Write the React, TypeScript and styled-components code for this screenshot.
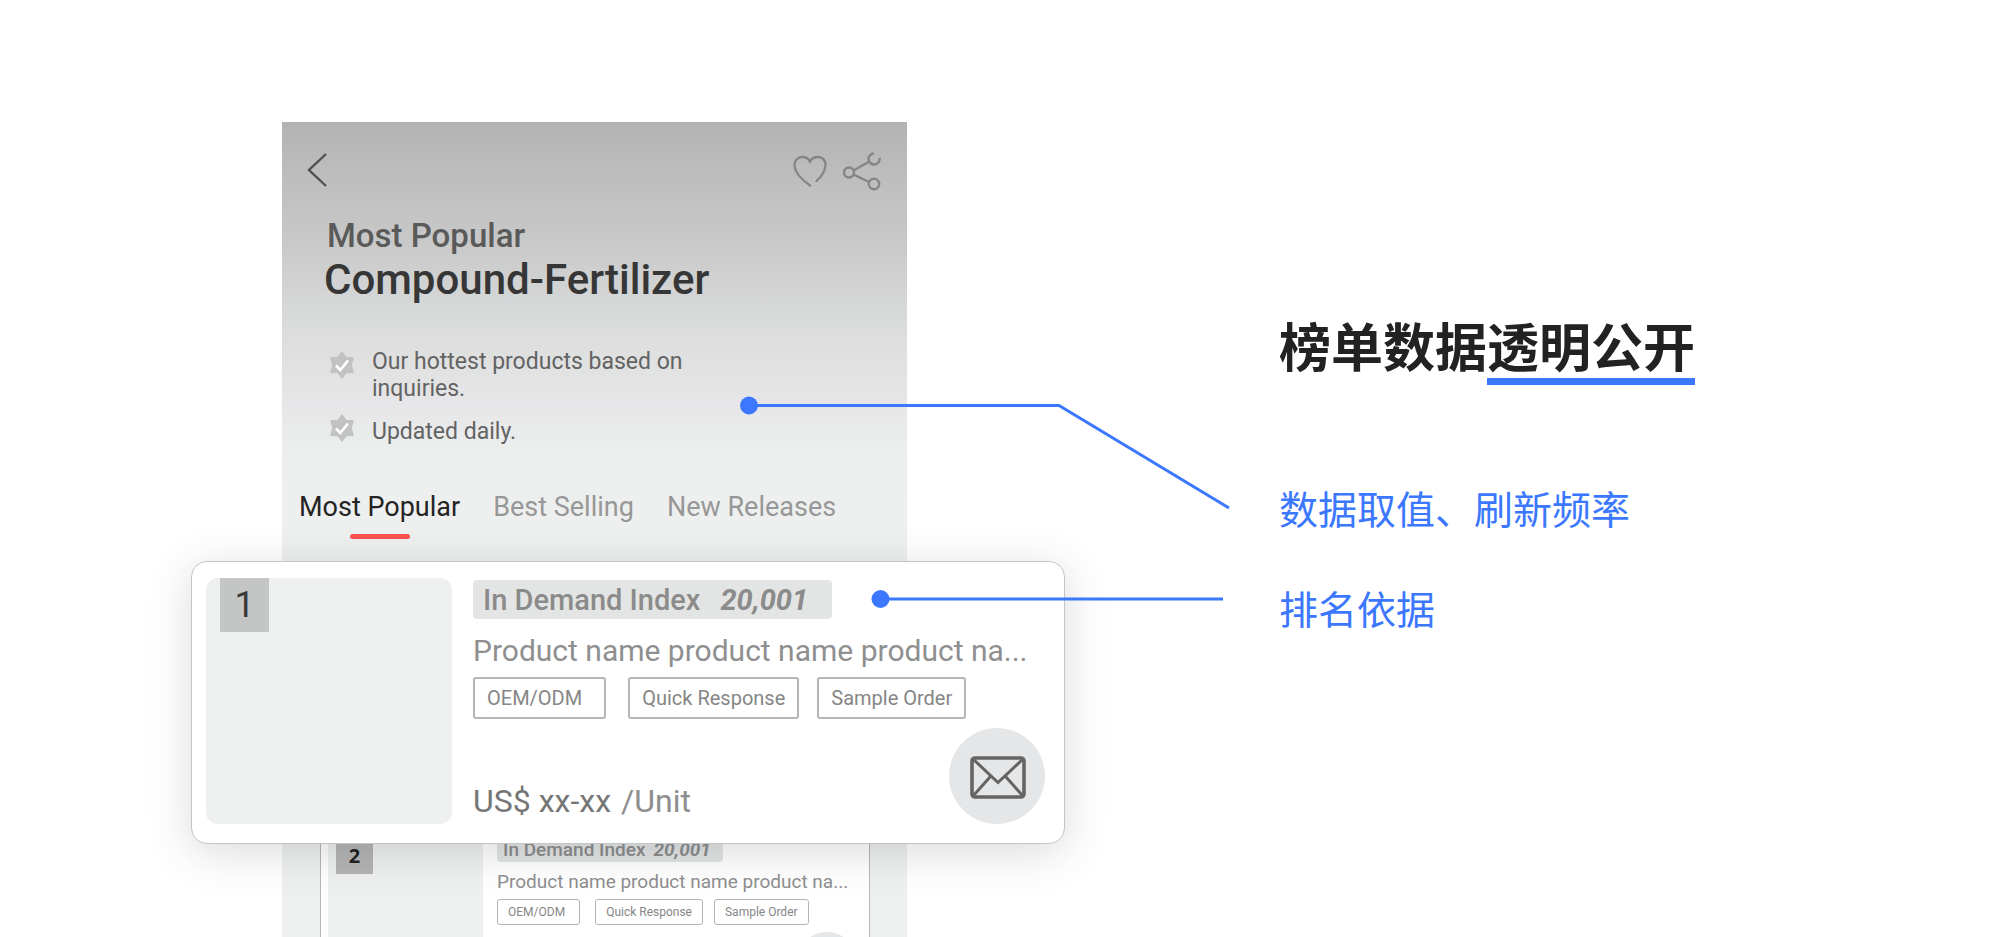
import React from "react";
import styled, { createGlobalStyle, css } from "styled-components";

const GlobalStyle = createGlobalStyle`
  * { box-sizing: border-box; }
  body {
    margin: 0;
    background: #fff;
    font-family: Roboto, "Noto Sans CJK SC", sans-serif;
  }
  h1, h2, p, ul { margin: 0; padding: 0; font-weight: 400; }
  ul { list-style: none; }
  button {
    border: 0;
    padding: 0;
    background: none;
    font: inherit;
    color: inherit;
    cursor: pointer;
  }
  svg { display: block; }
`;

const blue = "#3b78ff";

const Page = styled.main`
  display: grid;
  grid-template-columns: minmax(0, 191fr) auto minmax(0, 301fr);
  height: 100vh;
  padding-top: 122px;
  overflow: hidden;
`;

const Composition = styled.div`
  grid-column: 2;
  position: relative;
  display: flex;
  gap: 372px;
  padding-left: 91px;
`;

const Phone = styled.section`
  flex: none;
  width: 625px;
  background: linear-gradient(
    #b3b3b3 0,
    #bebfbe 64px,
    #c8c8c8 118px,
    #d5d6d7 180px,
    #dedfde 225px,
    #e6e6e8 280px,
    #edefee 335px,
    #eef0ef 400px
  );
`;

const TopBar = styled.header`
  display: flex;
  align-items: center;
  padding: 28px 26px 0 24px;
  height: 70px;
  color: #858585;
`;

const BackButton = styled.button`
  margin-right: auto;
  margin-bottom: 2px;
  color: #505050;
`;

const IconButton = styled.button`
  margin-left: 14px;
`;

const Heading = styled.div`
  padding: 23px 42px 0;
`;

const Eyebrow = styled.p`
  padding-left: 3px;
  font-size: 33px;
  line-height: 42px;
  font-weight: 500;
  color: #5a5a5a;
`;

const Category = styled.h1`
  font-size: 42px;
  line-height: 46px;
  font-weight: 500;
  color: #363636;
`;

const Facts = styled.ul`
  display: flex;
  flex-direction: column;
  gap: 16px;
  width: 430px;
  padding: 45px 0 0 46px;
`;

const Fact = styled.li`
  display: flex;
  gap: 16px;
  font-size: 23px;
  line-height: 27px;
  color: #636363;
  svg { flex: none; margin-top: 3px; }
  &:last-child svg { margin-top: -4px; }
`;

const Tabs = styled.nav`
  display: flex;
  align-items: flex-start;
  gap: 33px;
  padding: 46px 17px 0;
`;

const Tab = styled.button<{ $active?: boolean }>`
  display: flex;
  flex-direction: column;
  align-items: center;
  font-size: 27px;
  line-height: 32px;
  color: ${(p) => (p.$active ? "#242424" : "#979797")};
  ${(p) =>
    p.$active &&
    css`
      &::after {
        content: "";
        width: 60px;
        height: 5px;
        margin-top: 11px;
        border-radius: 3px;
        background: #ff5151;
      }
    `}
`;

const Products = styled.div`
  padding-top: 22px;
`;

interface Size {
  $small?: boolean;
}

const Card = styled.article<Size>`
  position: relative;
  display: flex;
  background: #fff;
  border: 1px solid #c4c6c5;
  ${(p) =>
    p.$small
      ? css`
          gap: 14px;
          height: 178px;
          margin: -19px 37px 0 38px;
          padding: 10px 12px 10px 7px;
          border-color: #b5b6b6;
        `
      : css`
          z-index: 1;
          gap: 21px;
          height: 283px;
          margin: 0 -158px 0 -91px;
          padding: 16px 19px 19px 14px;
          border-radius: 16px;
          box-shadow: 0 8px 44px rgba(50, 56, 66, 0.18);
        `}
`;

const Thumb = styled.div<Size>`
  flex: none;
  align-self: flex-start;
  width: ${(p) => (p.$small ? 155 : 246)}px;
  height: ${(p) => (p.$small ? 155 : 246)}px;
  padding-left: ${(p) => (p.$small ? 8 : 14)}px;
  border-radius: ${(p) => (p.$small ? 0 : 12)}px;
  background: #eef0ef;
`;

const Rank = styled.div<Size>`
  display: flex;
  align-items: center;
  justify-content: center;
  width: ${(p) => (p.$small ? 37 : 49)}px;
  height: ${(p) => (p.$small ? 38 : 54)}px;
  background: ${(p) => (p.$small ? "#b4b4b4" : "#c4c5c5")};
  color: ${(p) => (p.$small ? "#1e1e1e" : "#383838")};
  font: ${(p) => (p.$small ? '700 20px "Noto Sans", sans-serif' : "400 36px Roboto, sans-serif")};
`;

const Details = styled.div<Size>`
  flex: 1;
  min-width: 0;
  display: flex;
  flex-direction: column;
  align-items: flex-start;
  padding-top: ${(p) => (p.$small ? 0 : 2)}px;
`;

const DemandIndex = styled.p<Size>`
  display: flex;
  align-items: center;
  border-radius: 4px;
  background: #e3e5e4;
  color: #8b8b8b;
  font-weight: 500;
  ${(p) =>
    p.$small
      ? css`
          gap: 8px;
          height: 26px;
          padding: 0 12px 0 6px;
          font-size: 19px;
        `
      : css`
          gap: 20px;
          height: 39px;
          padding: 0 24px 0 10px;
          font-size: 29px;
        `}
  em { font-weight: 700; }
`;

const ProductName = styled.h2<Size>`
  max-width: 100%;
  white-space: nowrap;
  color: #8f8f8f;
  ${(p) =>
    p.$small
      ? css`
          margin: 8px 0 6px;
          font-size: 19px;
          line-height: 23px;
        `
      : css`
          margin: 14px 0 8px;
          font-size: 30px;
          line-height: 36px;
        `}
`;

const Tags = styled.ul<Size>`
  display: flex;
  gap: ${(p) => (p.$small ? 11 : 18)}px;
`;

const Tag = styled.li<Size>`
  display: flex;
  align-items: center;
  border: ${(p) => (p.$small ? 1 : 2)}px solid #b4b6b5;
  border-radius: 3px;
  color: #868686;
  height: ${(p) => (p.$small ? 26 : 42)}px;
  padding: 0 ${(p) => (p.$small ? 10 : 12)}px;
  font-size: ${(p) => (p.$small ? 12 : 20)}px;
  &:first-child {
    margin-right: 4px;
    padding-right: ${(p) => (p.$small ? 14 : 22)}px;
  }
`;

const Footer = styled.div`
  display: flex;
  align-items: flex-end;
  align-self: stretch;
  margin-top: auto;
`;

const Price = styled.p`
  display: flex;
  gap: 10px;
  padding-bottom: 4px;
  font-size: 32px;
  line-height: 38px;
  color: #767676;
  span { color: #8e8e8e; }
`;

const MailButton = styled.button<Size>`
  display: flex;
  align-items: center;
  justify-content: center;
  margin-left: auto;
  padding: 3px 0 0 2px;
  width: ${(p) => (p.$small ? 60 : 96)}px;
  height: ${(p) => (p.$small ? 60 : 96)}px;
  border-radius: 50%;
  background: #e5e6e7;
  color: #646464;
`;

const Copy = styled.section`
  flex: none;
  width: 420px;
  padding-top: 190px;
`;

const Title = styled.h1`
  margin-bottom: 92px;
  white-space: nowrap;
  font: 700 52px/66px "Noto Sans CJK SC", sans-serif;
  color: #222;
`;

const Underlined = styled.span`
  display: inline-block;
  border-bottom: 7px solid ${blue};
`;

const Point = styled.p`
  margin-bottom: 40px;
  white-space: nowrap;
  font: 400 39px/60px "Noto Sans CJK SC", sans-serif;
  color: ${blue};
`;

const Connectors = styled.svg`
  position: absolute;
  z-index: 2;
  left: 0;
  top: 0;
  pointer-events: none;
`;

const StarCheck = () => (
  <svg width="28" height="28" viewBox="0 0 28 28" aria-hidden="true">
    <path
      d="M14 1.200 18 6.600 25 6.800 23 14 25 21.200 18 21.400 14 26.800 10 21.400 3 21.200 5 14 3 6.800 10 6.600Z"
      fill="#c1c3c2"
      stroke="#c1c3c2"
      strokeWidth="1.6"
      strokeLinejoin="round"
    />
    <path d="M8 14.500 12.300 19 20 9.500" fill="none" stroke="#fff" strokeWidth="2.6" />
  </svg>
);

const Envelope = ({ width }: { width: number }) => (
  <svg width={width} viewBox="0 0 56 43" fill="none" stroke="currentColor" aria-hidden="true">
    <rect x="2" y="2" width="52" height="39" rx="3" strokeWidth="3.6" />
    <path d="M3 3 28 26.500 53 3M3.500 39.500 20 21M52.500 39.500 36 21" strokeWidth="3" />
  </svg>
);

interface ProductCardProps {
  rank: number;
  small?: boolean;
  price?: string;
}

const ProductCard = ({ rank, small, price }: ProductCardProps) => (
  <Card $small={small}>
    <Thumb $small={small}>
      <Rank $small={small}>{rank}</Rank>
    </Thumb>
    <Details $small={small}>
      <DemandIndex $small={small}>
        In Demand Index <em>20,001</em>
      </DemandIndex>
      <ProductName $small={small}>Product name product name product na...</ProductName>
      <Tags $small={small}>
        {["OEM/ODM", "Quick Response", "Sample Order"].map((t) => (
          <Tag key={t} $small={small}>
            {t}
          </Tag>
        ))}
      </Tags>
      <Footer>
        {price && (
          <Price>
            {price} <span>/Unit</span>
          </Price>
        )}
        <MailButton $small={small} aria-label="Contact supplier">
          <Envelope width={small ? 35 : 56} />
        </MailButton>
      </Footer>
    </Details>
  </Card>
);

export default function App() {
  return (
    <>
      <GlobalStyle />
      <Page>
        <Composition>
          <Phone>
            <TopBar>
              <BackButton aria-label="Back">
                <svg width="22" height="36" viewBox="0 0 22 36" fill="none" stroke="currentColor" strokeWidth="2.4">
                  <path d="M20 2 3 18 20 34" />
                </svg>
              </BackButton>
              <IconButton aria-label="Save">
                <svg width="36" height="34" viewBox="0 0 36 34" fill="none" stroke="currentColor" strokeWidth="2.3" strokeLinecap="round">
                  <path d="M18 31.500C9 25 3 18 2.500 12 2.200 6.500 5.500 3 10.500 3 14.500 3 16.500 4.500 18 7.500 19.500 4.500 22.500 3 26 3 30.800 3 33.800 6.500 33.500 11.500 33 17 29.500 22.500 24.500 27" />
                </svg>
              </IconButton>
              <IconButton aria-label="Share">
                <svg width="39" height="40" viewBox="0 0 39 40" fill="none" stroke="currentColor" strokeWidth="2.4">
                  <circle cx="7" cy="21.500" r="5" />
                  <circle cx="32" cy="33" r="5.200" />
                  <path d="M32 2.500A5.500 5.500 0 1 0 37.500 7M27.300 10.500 11.500 19.500M27 31 11.500 23.500" />
                </svg>
              </IconButton>
            </TopBar>
            <Heading>
              <Eyebrow>Most Popular</Eyebrow>
              <Category>Compound-Fertilizer</Category>
            </Heading>
            <Facts>
              <Fact>
                <StarCheck />
                Our hottest products based on inquiries.
              </Fact>
              <Fact>
                <StarCheck />
                Updated daily.
              </Fact>
            </Facts>
            <Tabs aria-label="Rankings">
              <Tab $active>Most Popular</Tab>
              <Tab>Best Selling</Tab>
              <Tab>New Releases</Tab>
            </Tabs>
            <Products>
              <ProductCard rank={1} price="US$ xx-xx" />
              <ProductCard rank={2} small />
            </Products>
          </Phone>
          <Copy>
            <Title>
              榜单数据<Underlined>透明公开</Underlined>
            </Title>
            <Point>数据取值、刷新频率</Point>
            <Point>排名依据</Point>
          </Copy>
          <Connectors width="1060" height="500" viewBox="0 0 1060 500" fill={blue} stroke={blue} strokeWidth="3" aria-hidden="true">
            <circle cx="558" cy="283.500" r="9" stroke="none" />
            <path d="M558 283.500H868L1038 386" fill="none" />
            <circle cx="689.500" cy="477" r="9" stroke="none" />
            <path d="M689 477H1032" fill="none" />
          </Connectors>
        </Composition>
      </Page>
    </>
  );
}
